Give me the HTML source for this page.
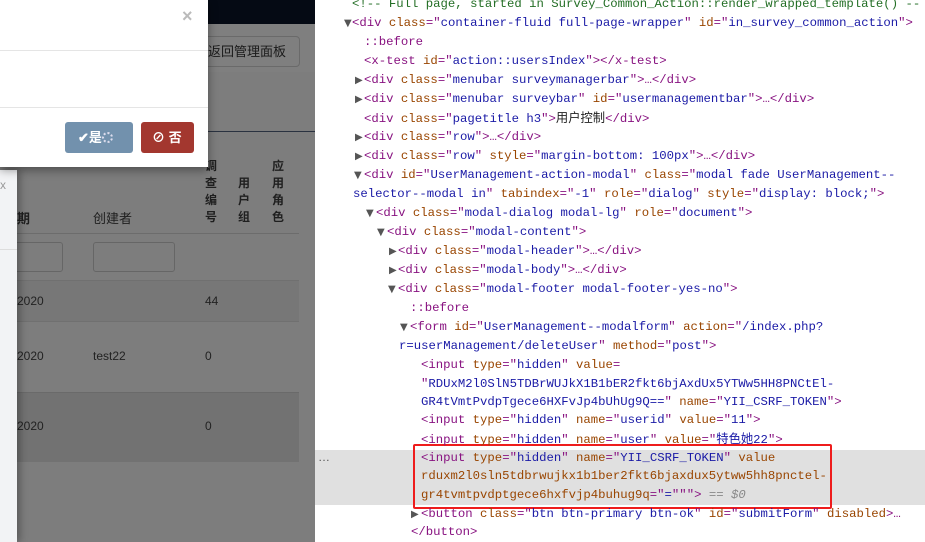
<!DOCTYPE html>
<html><head><meta charset="utf-8"><style>
*{margin:0;padding:0;box-sizing:border-box}
body{width:925px;height:542px;overflow:hidden;background:#fff;position:relative;font-family:"Liberation Sans","Noto Sans CJK SC",sans-serif}
.a{position:absolute}
#left{left:0;top:0;width:315px;height:542px;background:#7d7d7d;overflow:hidden}
.cjk{font-family:"Liberation Sans","Noto Sans CJK SC",sans-serif}
#dt{left:315px;top:0;width:610px;height:542px;font-family:"Liberation Mono",monospace;font-size:12.3px;color:#222}
.l{position:absolute;white-space:pre;line-height:19px;height:19px}
.t{color:#881280}.n{color:#994500}.v{color:#1a1aa6}.c{color:#236e25}.g{color:#888}
.tri{position:absolute;font-size:10px;line-height:19px;color:#555;font-family:"DejaVu Sans",sans-serif}
</style></head><body>
<div id="left" class="a">
 <div class="a" style="left:208px;top:0;width:107px;height:24px;background:#050a14"></div>
 <div class="a" style="left:0;top:24px;width:315px;height:48px;background:#7f7f7f"></div>
 <div class="a" style="left:203px;top:36px;width:97px;height:31px;border:1px solid #6a6a6a;border-radius:4px;font-size:13px;color:#1a1a1a;line-height:29px;padding-left:4px">返回管理面板</div>
 <div class="a" style="left:0;top:131px;width:315px;height:1px;background:#2a3240"></div>
 <div class="a" style="left:205px;top:158px;font-size:12px;line-height:17px;color:#1f1f1f;font-weight:bold;width:14px">调<br>查<br>编<br>号</div>
 <div class="a" style="left:238px;top:175px;font-size:12px;line-height:17px;color:#1f1f1f;font-weight:bold;width:14px">用<br>户<br>组</div>
 <div class="a" style="left:272px;top:158px;font-size:12px;line-height:17px;color:#1f1f1f;font-weight:bold;width:14px">应<br>用<br>角<br>色</div>
 <div class="a" style="left:17px;top:208px;font-size:13px;color:#1f1f1f;font-weight:bold">期</div>
 <div class="a" style="left:93px;top:208px;font-size:13px;color:#1f1f1f">创建者</div>
 <div class="a" style="left:0;top:233px;width:299px;height:1px;background:#6c6c6c"></div>
 <div class="a" style="left:10px;top:242px;width:53px;height:30px;border:1px solid #666;border-radius:3px"></div>
 <div class="a" style="left:93px;top:242px;width:82px;height:30px;border:1px solid #666;border-radius:3px"></div>
 <div class="a" style="left:0;top:280px;width:299px;height:42px;background:#777;border-top:1px solid #707070;border-bottom:1px solid #707070"></div>
 <div class="a" style="left:0;top:392px;width:299px;height:70px;background:#727272;border-top:1px solid #6a6a6a"></div>
 <div class="a" style="left:17px;top:294px;font-size:12px;color:#222">2020</div>
 <div class="a" style="left:205px;top:294px;font-size:12px;color:#222">44</div>
 <div class="a" style="left:17px;top:349px;font-size:12px;color:#222">2020</div>
 <div class="a" style="left:93px;top:349px;font-size:12px;color:#222">test22</div>
 <div class="a" style="left:205px;top:349px;font-size:12px;color:#222">0</div>
 <div class="a" style="left:17px;top:419px;font-size:12px;color:#222">2020</div>
 <div class="a" style="left:205px;top:419px;font-size:12px;color:#222">0</div>
 <div class="a" style="left:0;top:170px;width:17px;height:372px;background:#f2f3f5;box-shadow:3px 0 8px rgba(0,0,0,.3)"><div class="a" style="left:0;top:79px;width:17px;height:1px;background:#ddd"></div><div class="a" style="left:0;top:8px;font-size:12px;color:#999">x</div></div>
 <div class="a" style="left:0;top:0;width:208px;height:167px;background:#fff;box-shadow:0 3px 9px rgba(0,0,0,.4)">
  <div class="a" style="left:182px;top:6px;font-size:18px;color:#bbb;font-weight:bold">×</div>
  <div class="a" style="left:0;top:50px;width:208px;height:1px;background:#e5e5e5"></div>
  <div class="a" style="left:0;top:107px;width:208px;height:1px;background:#e5e5e5"></div>
  <div class="a" style="left:65px;top:122px;width:68px;height:31px;background:#7291ad;border-radius:3px;color:#fff;font-size:13px;line-height:31px;padding-left:13px;font-weight:bold">✔是<span style="display:inline-block;width:11px;height:11px;border:2px dotted #dde;border-radius:50%;vertical-align:-1px"></span></div>
  <div class="a" style="left:141px;top:122px;width:53px;height:31px;background:#a3372f;border-radius:3px;color:#fff;font-size:13px;line-height:31px;padding-left:11px;font-weight:bold">⊘ 否</div>
 </div>
</div>
<div class="a" style="left:315px;top:450px;width:610px;height:55px;background:#e0e0e0"></div>
<div class="a" style="left:318px;top:450px;font-size:12px;color:#555">…</div>
<div class="a" style="left:413px;top:444px;width:419px;height:65px;border:2px solid #ee1c1c;border-radius:2px"></div>
<div id="dt" class="a">
<div class="l" style="left:37px;top:-5px"><span class="c">&lt;!-- Full page, started in Survey_Common_Action::render_wrapped_template() --</span></div>
<span class="tri" style="left:29px;top:14px">▼</span>
<div class="l" style="left:37px;top:14px"><span class="t">&lt;div </span><span class="n">class</span><span class="t">="</span><span class="v">container-fluid full-page-wrapper</span><span class="t">" </span><span class="n">id</span><span class="t">="</span><span class="v">in_survey_common_action</span><span class="t">"&gt;</span></div>
<div class="l" style="left:49px;top:33px"><span class="t">::before</span></div>
<div class="l" style="left:49px;top:52px"><span class="t">&lt;x-test </span><span class="n">id</span><span class="t">="</span><span class="v">action::usersIndex</span><span class="t">"&gt;&lt;/x-test&gt;</span></div>
<span class="tri" style="left:40px;top:71px">▶</span>
<div class="l" style="left:49px;top:71px"><span class="t">&lt;div </span><span class="n">class</span><span class="t">="</span><span class="v">menubar surveymanagerbar</span><span class="t">"&gt;…&lt;/div&gt;</span></div>
<span class="tri" style="left:40px;top:90px">▶</span>
<div class="l" style="left:49px;top:90px"><span class="t">&lt;div </span><span class="n">class</span><span class="t">="</span><span class="v">menubar surveybar</span><span class="t">" </span><span class="n">id</span><span class="t">="</span><span class="v">usermanagementbar</span><span class="t">"&gt;…&lt;/div&gt;</span></div>
<div class="l" style="left:49px;top:109px"><span class="t">&lt;div </span><span class="n">class</span><span class="t">="</span><span class="v">pagetitle h3</span><span class="t">"&gt;</span><span class="cjk">用户控制</span><span class="t">&lt;/div&gt;</span></div>
<span class="tri" style="left:40px;top:128px">▶</span>
<div class="l" style="left:49px;top:128px"><span class="t">&lt;div </span><span class="n">class</span><span class="t">="</span><span class="v">row</span><span class="t">"&gt;…&lt;/div&gt;</span></div>
<span class="tri" style="left:40px;top:147px">▶</span>
<div class="l" style="left:49px;top:147px"><span class="t">&lt;div </span><span class="n">class</span><span class="t">="</span><span class="v">row</span><span class="t">" </span><span class="n">style</span><span class="t">="</span><span class="v">margin-bottom: 100px</span><span class="t">"&gt;…&lt;/div&gt;</span></div>
<span class="tri" style="left:39px;top:166px">▼</span>
<div class="l" style="left:49px;top:166px"><span class="t">&lt;div </span><span class="n">id</span><span class="t">="</span><span class="v">UserManagement-action-modal</span><span class="t">" </span><span class="n">class</span><span class="t">="</span><span class="v">modal fade UserManagement--</span></div>
<div class="l" style="left:38px;top:185px"><span class="v">selector--modal in</span><span class="t">" </span><span class="n">tabindex</span><span class="t">="</span><span class="v">-1</span><span class="t">" </span><span class="n">role</span><span class="t">="</span><span class="v">dialog</span><span class="t">" </span><span class="n">style</span><span class="t">="</span><span class="v">display: block;</span><span class="t">"&gt;</span></div>
<span class="tri" style="left:51px;top:204px">▼</span>
<div class="l" style="left:61px;top:204px"><span class="t">&lt;div </span><span class="n">class</span><span class="t">="</span><span class="v">modal-dialog modal-lg</span><span class="t">" </span><span class="n">role</span><span class="t">="</span><span class="v">document</span><span class="t">"&gt;</span></div>
<span class="tri" style="left:62px;top:223px">▼</span>
<div class="l" style="left:72px;top:223px"><span class="t">&lt;div </span><span class="n">class</span><span class="t">="</span><span class="v">modal-content</span><span class="t">"&gt;</span></div>
<span class="tri" style="left:74px;top:242px">▶</span>
<div class="l" style="left:83px;top:242px"><span class="t">&lt;div </span><span class="n">class</span><span class="t">="</span><span class="v">modal-header</span><span class="t">"&gt;…&lt;/div&gt;</span></div>
<span class="tri" style="left:74px;top:261px">▶</span>
<div class="l" style="left:83px;top:261px"><span class="t">&lt;div </span><span class="n">class</span><span class="t">="</span><span class="v">modal-body</span><span class="t">"&gt;…&lt;/div&gt;</span></div>
<span class="tri" style="left:73px;top:280px">▼</span>
<div class="l" style="left:83px;top:280px"><span class="t">&lt;div </span><span class="n">class</span><span class="t">="</span><span class="v">modal-footer modal-footer-yes-no</span><span class="t">"&gt;</span></div>
<div class="l" style="left:95px;top:299px"><span class="t">::before</span></div>
<span class="tri" style="left:85px;top:318px">▼</span>
<div class="l" style="left:95px;top:318px"><span class="t">&lt;form </span><span class="n">id</span><span class="t">="</span><span class="v">UserManagement--modalform</span><span class="t">" </span><span class="n">action</span><span class="t">="</span><span class="v">/index.php?</span></div>
<div class="l" style="left:84px;top:337px"><span class="v">r=userManagement/deleteUser</span><span class="t">" </span><span class="n">method</span><span class="t">="</span><span class="v">post</span><span class="t">"&gt;</span></div>
<div class="l" style="left:106px;top:356px"><span class="t">&lt;input </span><span class="n">type</span><span class="t">="</span><span class="v">hidden</span><span class="t">" </span><span class="n">value</span><span class="t">=</span></div>
<div class="l" style="left:106px;top:375px"><span class="t">"</span><span class="v">RDUxM2l0SlN5TDBrWUJkX1B1bER2fkt6bjAxdUx5YTWw5HH8PNCtEl-</span></div>
<div class="l" style="left:106px;top:393px"><span class="v">GR4tVmtPvdpTgece6HXFvJp4bUhUg9Q==</span><span class="t">" </span><span class="n">name</span><span class="t">="</span><span class="v">YII_CSRF_TOKEN</span><span class="t">"&gt;</span></div>
<div class="l" style="left:106px;top:411px"><span class="t">&lt;input </span><span class="n">type</span><span class="t">="</span><span class="v">hidden</span><span class="t">" </span><span class="n">name</span><span class="t">="</span><span class="v">userid</span><span class="t">" </span><span class="n">value</span><span class="t">="</span><span class="v">11</span><span class="t">"&gt;</span></div>
<div class="l" style="left:106px;top:430px"><span class="t">&lt;input </span><span class="n">type</span><span class="t">="</span><span class="v">hidden</span><span class="t">" </span><span class="n">name</span><span class="t">="</span><span class="v">user</span><span class="t">" </span><span class="n">value</span><span class="t">="</span><span class="v cjk">特色她</span><span class="v">22</span><span class="t">"&gt;</span></div>
<div class="l" style="left:106px;top:449px"><span class="t">&lt;input </span><span class="n">type</span><span class="t">="</span><span class="v">hidden</span><span class="t">" </span><span class="n">name</span><span class="t">="</span><span class="v">YII_CSRF_TOKEN</span><span class="t">" </span><span class="n">value</span></div>
<div class="l" style="left:106px;top:467px"><span class="n">rduxm2l0sln5tdbrwujkx1b1ber2fkt6bjaxdux5ytww5hh8pnctel-</span></div>
<div class="l" style="left:106px;top:486px"><span class="n">gr4tvmtpvdptgece6hxfvjp4buhug9q</span><span class="t">="</span><span class="v">=</span><span class="t">""</span><span class="t">"&gt;</span><span class="g"> == <i>$0</i></span></div>
<span class="tri" style="left:96px;top:505px">▶</span>
<div class="l" style="left:106px;top:505px"><span class="t">&lt;button </span><span class="n">class</span><span class="t">="</span><span class="v">btn btn-primary btn-ok</span><span class="t">" </span><span class="n">id</span><span class="t">="</span><span class="v">submitForm</span><span class="t">" </span><span class="n">disabled</span><span class="t">&gt;…</span></div>
<div class="l" style="left:96px;top:523px"><span class="t">&lt;/button&gt;</span></div>
</div>
</body></html>
